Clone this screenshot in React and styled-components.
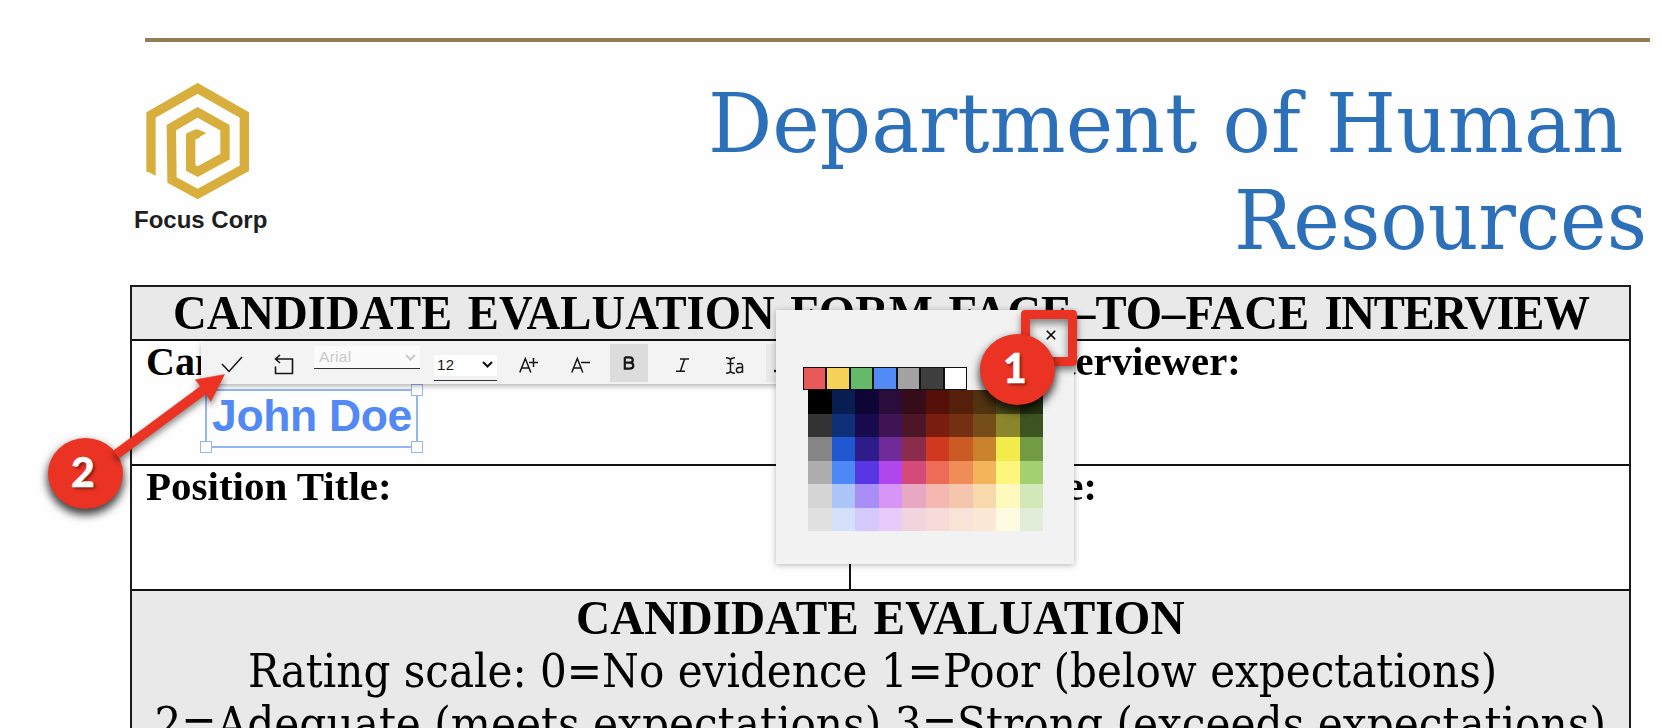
import React from "react";
import styled, { createGlobalStyle } from "styled-components";

const Global = createGlobalStyle`
  * { box-sizing: border-box; }
  body { margin: 0; background: #fefefe; overflow: hidden; }
`;

const condensedSerif = `"DejaVu Serif Condensed", "DejaVu Serif", serif`;

const Sheet = styled.main`
  position: relative;
  width: 1662px;
  height: 728px;
  overflow: hidden;
  padding-top: 38px;
  background: #fefefe;
  color: #000;
  font-family: "Liberation Serif", serif;
`;

const Rule = styled.hr`
  width: 1505px;
  height: 3.5px;
  margin: 0 0 0 145px;
  border: 0;
  background: #937d57;
`;

const Letterhead = styled.header`
  display: flex;
  justify-content: space-between;
  height: 243.5px;
  padding: 33px 15px 0 133px;
`;

const Brand = styled.div`
  display: flex;
  flex-direction: column;
  width: 140px;
  padding: 8px 0 0 13px;
`;

const BrandName = styled.span`
  margin: 5px 0 0 -12px;
  font: bold 24px/28px "Liberation Sans", sans-serif;
  color: #1f1f1f;
  white-space: nowrap;
`;

const Title = styled.h1`
  display: flex;
  flex-direction: column;
  align-items: flex-end;
  margin: 0;
  color: #2b70b9;
  font-family: ${condensedSerif};
  font-stretch: condensed;
  font-size: 82px;
  font-weight: normal;
  line-height: 97px;
`;

const Stretch = styled.span`
  display: inline-block;
  white-space: nowrap;
  transform: scaleX(${(p) => p.$x});
  transform-origin: ${(p) => p.$from || "center"} center;
  letter-spacing: ${(p) => p.$gap || 0}px;
  word-spacing: ${(p) => p.$words || 0}px;
  margin-right: ${(p) => p.$after || 0}px;
`;

const Tight = styled.span`
  letter-spacing: -1.4px;
`;

const Form = styled.section`
  width: 1501px;
  margin-left: 130px;
  border: solid #1c1c1c;
  border-width: 2px 2px 0;
`;

const Banner = styled.h2`
  height: 54px;
  margin: 0;
  border-bottom: 2px solid #111;
  background: #e9e9e9;
  font-size: 49px;
  line-height: 52px;
  text-align: center;
`;

const FormRow = styled.div`
  display: grid;
  grid-template-columns: 717px 1fr;
  height: ${(p) => p.$h}px;
  border-bottom: 2px solid #111;
`;

const Cell = styled.div`
  padding-left: ${(p) => p.$pad}px;
  font-size: 40px;
  font-weight: bold;
  line-height: 42px;
  white-space: nowrap;
  & + & { border-left: 2px solid #111; }
`;

const Rating = styled.div`
  display: flex;
  flex-direction: column;
  align-items: center;
  height: 160px;
  padding-top: 1px;
  background: #e9e9e9;
  font-family: ${condensedSerif};
  font-stretch: condensed;
  font-size: 46px;
  line-height: 52.5px;
`;

const Heading = styled.strong`
  height: 53px;
  font-family: "Liberation Serif", serif;
  font-size: 49px;
`;

const Selection = styled.div`
  position: absolute;
  left: 205px;
  top: 389px;
  width: 213px;
  height: 59px;
  padding-left: 5px;
  border: 2px solid #93b5f7;
  color: #5289f5;
  font: bold 44.5px/49px "Liberation Sans", sans-serif;
  letter-spacing: -0.35px;
  white-space: nowrap;
`;

const Handle = styled.i`
  position: absolute;
  width: 12px;
  height: 12px;
  border: 1.5px solid #96b3f8;
  background: #fff;
  ${(p) => p.$v}: -7px;
  ${(p) => p.$h}: -7px;
`;

const Toolbar = styled.div`
  position: absolute;
  left: 201px;
  top: 342px;
  display: flex;
  align-items: flex-start;
  width: 640px;
  height: 41.5px;
  padding-top: 2px;
  background: #f3f3f3;
  box-shadow: 0 2px 5px rgba(0, 0, 0, 0.3);
  font-family: "Liberation Sans", sans-serif;
`;

const Tool = styled.button`
  display: flex;
  align-items: center;
  justify-content: center;
  width: 38px;
  height: 38px;
  margin: 0 0 0 ${(p) => p.$ml}px;
  padding: 0;
  border: 0;
  background: ${(p) => p.$bg || "transparent"};
`;

const Select = styled.div`
  display: flex;
  align-items: center;
  justify-content: space-between;
  width: ${(p) => p.$w}px;
  height: ${(p) => p.$h}px;
  margin: ${(p) => p.$mt}px 0 0 ${(p) => p.$ml}px;
  padding: 0 4px 0 ${(p) => p.$pl}px;
  border-bottom: 1.5px solid #333;
  background: ${(p) => p.$bg};
  color: ${(p) => p.$color};
  font-size: ${(p) => p.$size}px;
`;

const SelectValue = styled.span`
  padding-bottom: ${(p) => p.$lift || 0}px;
  letter-spacing: 0.3px;
`;

const Picker = styled.div`
  position: absolute;
  left: 776px;
  top: 310px;
  width: 298px;
  height: 254px;
  padding: 57px 0 0 27px;
  background: #f2f2f2;
  box-shadow: 0 1px 6px rgba(0, 0, 0, 0.3);
`;

const Presets = styled.div`
  display: flex;
  width: 164px;
  height: 23px;
  border: 1px solid #111;
`;

const Preset = styled.i`
  flex: 1;
  border: 1px solid #111;
  border-width: 0 1px;
  background: ${(p) => p.$c};
  &:first-child { border-left: 0; }
  &:last-child { border-right: 0; }
`;

const Palette = styled.div`
  display: grid;
  grid-template-columns: repeat(10, 1fr);
  grid-template-rows: repeat(6, 1fr);
  width: 235px;
  height: 141px;
  margin-left: 5px;
`;

const Swatch = styled.i`
  background: ${(p) => p.$c};
`;

const CloseFrame = styled.div`
  position: absolute;
  left: 1021px;
  top: 310px;
  display: flex;
  align-items: center;
  justify-content: center;
  width: 56px;
  height: 56px;
  border: 9px solid #ea3323;
  border-radius: 4px;
  box-shadow: 0 4px 7px rgba(0, 0, 0, 0.5), inset 0 4px 8px rgba(0, 0, 0, 0.5);
  padding: 0 0 7px 4px;
`;

const Marker = styled.div`
  position: absolute;
  left: ${(p) => p.$left}px;
  top: ${(p) => p.$top}px;
  width: 75px;
  height: 71px;
  padding-right: 5px;
  border-radius: 50%;
  background: #ea3323;
  box-shadow: 0 5px 9px 1px rgba(0, 0, 0, 0.75);
  color: #fff;
  font: 900 41px/68px Lato, sans-serif;
  -webkit-text-stroke: 0.4px #fff;
  text-align: center;
  text-shadow: 2px 2px 3px rgba(0, 0, 0, 0.45);
`;

const ArrowLayer = styled.svg`
  position: absolute;
  left: 100px;
  top: 360px;
  overflow: visible;
  filter: drop-shadow(0 4px 3px rgba(0, 0, 0, 0.45));
`;

const presets = ["#e85a5a", "#f6d25a", "#64b96b", "#528bf6", "#a3a3a3", "#3e3e3e", "#ffffff"];

const palette = [
  "#000000", "#081d52", "#0e0536", "#2a0d3b", "#360c1a", "#551109", "#54200c", "#523310", "#4c4a18", "#243312",
  "#333333", "#0f2f78", "#170b4d", "#3f1454", "#4c1528", "#791e0e", "#743012", "#744d18", "#8b862b", "#3d5322",
  "#858585", "#1f58d0", "#2e1c8b", "#712b99", "#8c2c4c", "#d1391e", "#cb5b24", "#c8832c", "#f3ea4b", "#739b44",
  "#adadad", "#4d88f7", "#5737e3", "#b047ec", "#d44a78", "#ee6b58", "#f08c57", "#f4b459", "#fef57d", "#a3d070",
  "#d6d6d6", "#adc6fa", "#a98ff5", "#d795f8", "#e8a8c2", "#f4b7b1", "#f5c6ae", "#f8d9ac", "#fefabe", "#d3e8b9",
  "#e1e1e1", "#d4e1fc", "#d5c8fb", "#e9cbfb", "#f2d4df", "#f8dad9", "#f9e3d7", "#fbe9d5", "#fdfce0", "#e1edd8",
];

const LogoMark = () => (
  <svg width="104" height="118" viewBox="138 190 312 354">
    <g fill="none" stroke="#d8af3c" strokeWidth="28" strokeMiterlimit="8">
      <path d="M153 456V286L293 206L433 286V446L293 523L216 481L214 324L293 278L375 324V411L293 456L272 445V351L294 341" />
    </g>
    <path d="M139 454H167V468ZM258 343L293 329L319 340L287 358Z" fill="#d8af3c" />
  </svg>
);

const Icon = ({ w, h, d, sw = 1.5, color = "#161616", dy = 0 }) => (
  <svg
    width={w}
    height={h}
    viewBox={`0 ${-dy} ${w} ${h}`}
    overflow="visible"
    fill="none"
    stroke={color}
    strokeWidth={sw}
  >
    <path d={d} />
  </svg>
);

export default function App() {
  return (
    <>
      <Global />
      <Sheet>
        <Rule />
        <Letterhead>
          <Brand>
            <LogoMark />
            <BrandName>Focus Corp</BrandName>
          </Brand>
          <Title>
            <Stretch $x={1.088} $from="right" $after={24}>Department of Human</Stretch>
            <Stretch $x={1.067} $from="right">Resources</Stretch>
          </Title>
        </Letterhead>
        <Form>
          <Banner>
            <Stretch $x={0.953} $words={4}>
              CANDIDATE EVALUATION FORM FACE–TO–FACE <Tight>INTERVIEW</Tight>
            </Stretch>
          </Banner>
          <FormRow $h={125}>
            <Cell $pad={14}>Candidate Name:</Cell>
            <Cell $pad={16}><Stretch $x={1.02} $from="left">Name of Interviewer:</Stretch></Cell>
          </FormRow>
          <FormRow $h={125}>
            <Cell $pad={14}><Stretch $x={1.025} $from="left">Position Title:</Stretch></Cell>
            <Cell $pad={16}><Stretch $x={1.01} $from="left">Review Date:</Stretch></Cell>
          </FormRow>
          <Rating>
            <Heading><Stretch $x={0.965} $words={3}>CANDIDATE EVALUATION</Stretch></Heading>
            <Stretch $x={1.018} $after={15}>Rating scale: 0=No evidence 1=Poor (below expectations)</Stretch>
            <Stretch $x={1.022}>2=Adequate (meets expectations) 3=Strong (exceeds expectations)</Stretch>
          </Rating>
        </Form>

        <Selection>
          John Doe
          <Handle $v="top" $h="right" />
          <Handle $v="bottom" $h="left" />
          <Handle $v="bottom" $h="right" />
        </Selection>

        <Toolbar>
          <Tool $ml={12}>
            <Icon w={22} h={18} d="M1 8L8 15.5L21 1" dy={2} />
          </Tool>
          <Tool $ml={14}>
            <Icon w={20} h={20} d="M1.5 11.5V18.5H18.5V4H1.5M6 0L1.5 4L6 8" sw={1.6} dy={2} />
          </Tool>
          <Select $w={106} $h={23} $mt={2} $ml={11} $pl={5} $bg="#fbfbfb" $color="#c8c8c8" $size={15.5}>
            <SelectValue>Arial</SelectValue>
            <Icon w={11} h={7} d="M1 1L5.5 5.5L10 1" sw={2} color="#c8c8c8" />
          </Select>
          <Select $w={63} $h={26} $mt={10.5} $ml={14} $pl={3} $bg="linear-gradient(#fff 21px, #f3f3f3 21px)" $color="#161616" $size={15}>
            <SelectValue $lift={5}>12</SelectValue>
            <Icon w={11} h={7} d="M1 1L5.5 5.5L10 1" sw={2.2} dy={-3} />
          </Select>
          <Tool $ml={13}>
            <Icon w={20} h={16} d="M.8 15.5L6.3 1.5L11.8 15.5M2.7 11H9.9M10 5.5H19M14.5 1V10" dy={2} />
          </Tool>
          <Tool $ml={14}>
            <Icon w={20} h={16} d="M.8 15.5L6.3 1.5L11.8 15.5M2.7 11H9.9M10 5.5H19" dy={2} />
          </Tool>
          <Tool $ml={10} $bg="#dcdcdc">
            <Icon w={12} h={14} d="M1.8 1.3H6.5Q9.8 1.3 9.8 4Q9.8 6.7 6.5 6.7H1.8M6.5 6.7Q10.3 6.7 10.3 9.7Q10.3 12.6 6.5 12.6H1.8V1.3" sw={2.2} />
          </Tool>
          <Tool $ml={15}>
            <Icon w={13} h={14} d="M4 1H13M0 13.3H9M8.6 1L4.4 13.3" dy={2} />
          </Tool>
          <Tool $ml={15}>
            <Icon w={18} h={17} d="M0 .8Q4 .8 4.5 3Q5 .8 9 .8M4.5 3V14Q4 16.2 0 16.2M4.5 14Q5 16.2 9 16.2M1.3 6.5H7.7M11 7Q16.5 5.3 16.5 9V15.8M16.5 10.5H13Q10.4 10.8 10.4 13Q10.4 15.6 13 15.6Q16.5 15.4 16.5 12.5" dy={2} />
          </Tool>
          <Tool $ml={12} $bg="#e8e8e8">
            <Icon w={22} h={14} d="M0 13H22" sw={2.4} dy={2} />
          </Tool>
        </Toolbar>

        <Picker>
          <Presets>
            {presets.map((c) => <Preset key={c} $c={c} />)}
          </Presets>
          <Palette>
            {palette.map((c, i) => <Swatch key={i} $c={c} />)}
          </Palette>
        </Picker>

        <CloseFrame>
          <Icon w={10} h={10} d="M.8 .8L9.2 9.2M9.2 .8L.8 9.2" sw={1.6} color="#000" />
        </CloseFrame>
        <Marker $left={980} $top={334}>1</Marker>
        <Marker $left={48} $top={438}>2</Marker>
        <ArrowLayer width="130" height="110" viewBox="100 360 130 110">
          <path
            d="M113 451L200.5 386.3L195.3 379.7L224.5 374.5L210.8 401.5L206 394L119.5 457.8Z"
            fill="#ea3323"
            stroke="#ea3323"
            strokeWidth="0.5"
          />
        </ArrowLayer>
      </Sheet>
    </>
  );
}
